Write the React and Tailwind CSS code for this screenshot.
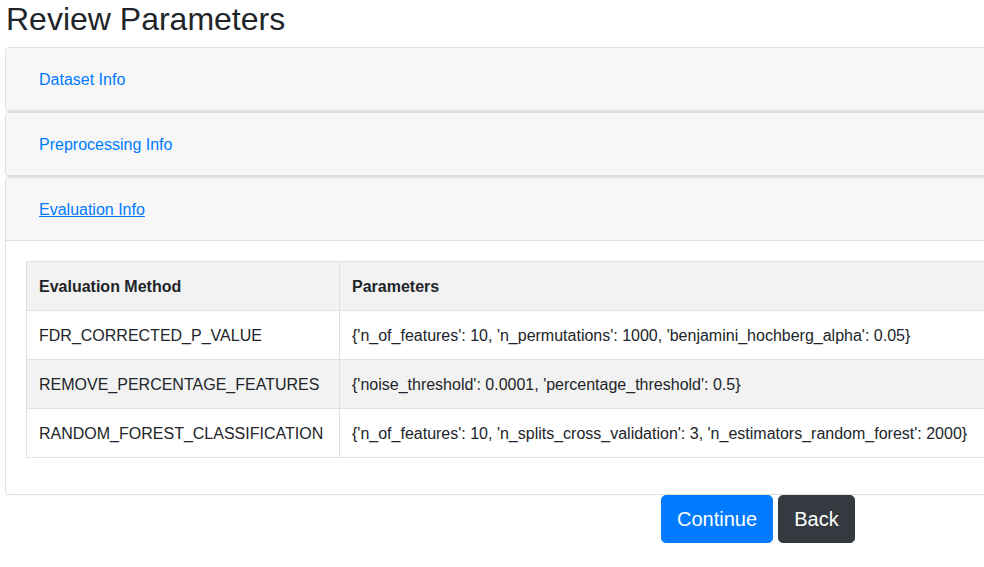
export default function App() {
  const rows = [
    ["FDR_CORRECTED_P_VALUE", "{'n_of_features': 10, 'n_permutations': 1000, 'benjamini_hochberg_alpha': 0.05}", false],
    ["REMOVE_PERCENTAGE_FEATURES", "{'noise_threshold': 0.0001, 'percentage_threshold': 0.5}", true],
    ["RANDOM_FOREST_CLASSIFICATION", "{'n_of_features': 10, 'n_splits_cross_validation': 3, 'n_estimators_random_forest': 2000}", false],
  ];
  const font = { fontFamily: '"Liberation Sans", Arial, sans-serif' };
  return (
    <div className="w-[984px] h-[567px] overflow-hidden bg-white text-[#212529] px-[5px]" style={font}>
      <h2 className="text-[32px] leading-[38.4px] font-medium mb-[9px] ml-px">Review Parameters</h2>
      <div className="w-[1250px]">
        {["Dataset Info", "Preprocessing Info"].map((t) => (
          <div key={t} className="border border-[#dfdfdf] rounded-[4px] bg-white">
            <div className="bg-[#f7f7f7] border-b border-[#dfdfdf] px-5 py-3 rounded-t-[3px]">
              <span className="inline-block border border-transparent px-3 pt-[7px] pb-[5px] text-base leading-6 text-[#007bff]">{t}</span>
            </div>
          </div>
        ))}
        <div className="border border-[#dfdfdf] rounded-[4px] bg-white">
          <div className="bg-[#f7f7f7] border-b border-[#dfdfdf] px-5 py-3 rounded-t-[3px]">
            <span className="inline-block border border-transparent px-3 pt-[7px] pb-[5px] text-base leading-6 text-[#007bff] underline">Evaluation Info</span>
          </div>
          <div className="p-5">
            <table className="w-full border-collapse text-base leading-6 mb-4">
              <thead>
                <tr className="bg-[#f2f2f2]">
                  <th className="w-[313px] border border-[#dee2e6] px-3 pt-[13px] pb-[11px] text-left font-bold">Evaluation Method</th>
                  <th className="border border-[#dee2e6] px-3 pt-[13px] pb-[11px] text-left font-bold">Parameters</th>
                </tr>
              </thead>
              <tbody>
                {rows.map(([a, b, g]) => (
                  <tr key={a} className={g ? "bg-[#f2f2f2]" : "bg-white"}>
                    <td className="border border-[#dee2e6] px-3 pt-[13px] pb-[11px] whitespace-nowrap">{a}</td>
                    <td className="border border-[#dee2e6] px-3 pt-[13px] pb-[11px] whitespace-nowrap">{b}</td>
                  </tr>
                ))}
              </tbody>
            </table>
          </div>
        </div>
      </div>
      <div className="flex gap-[5px] ml-[656px]">
        <button className="w-[112px] bg-[#007bff] text-white text-[20px] leading-[30px] py-2 rounded-[4.8px] border border-[#007bff]">Continue</button>
        <button className="w-[77px] bg-[#343a40] text-white text-[20px] leading-[30px] py-2 rounded-[4.8px] border border-[#343a40]">Back</button>
      </div>
    </div>
  );
}
